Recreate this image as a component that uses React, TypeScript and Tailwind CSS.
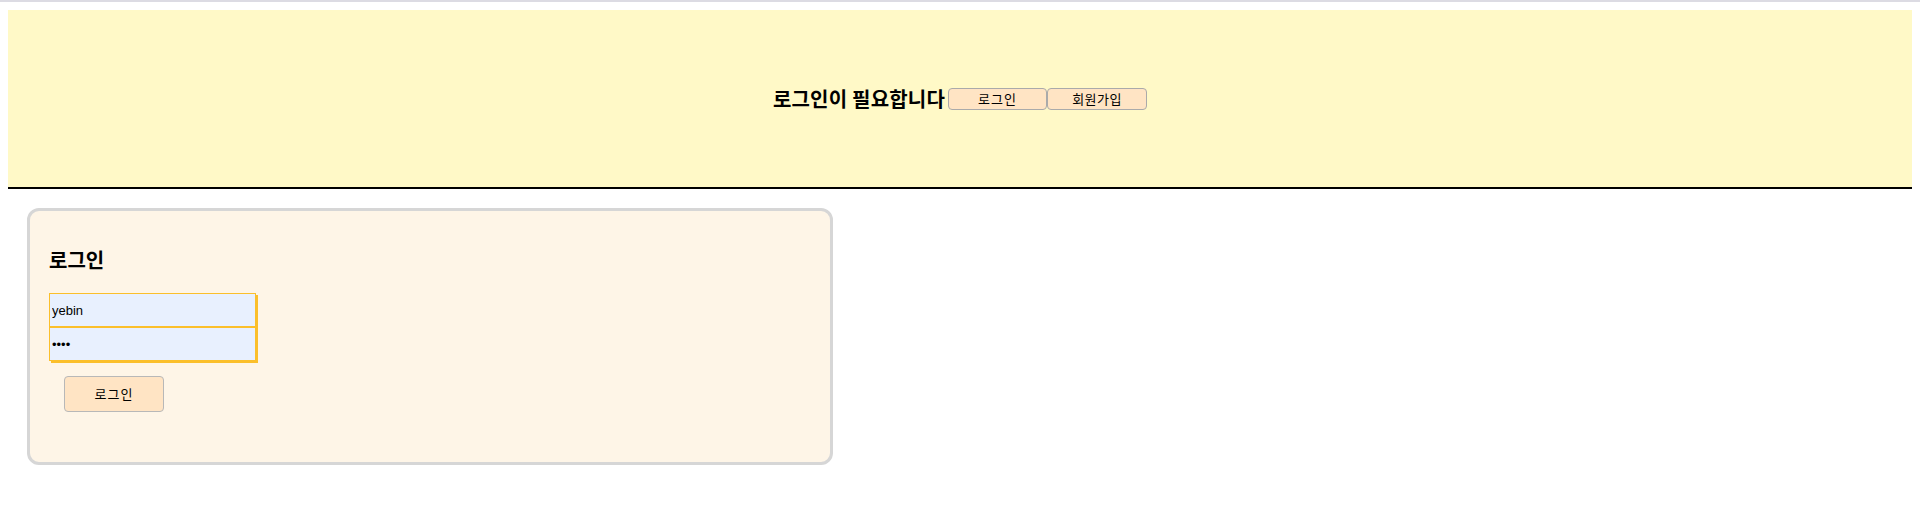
export default function App() {
  return (
    <div className="min-h-[531px] bg-white font-['Malgun_Gothic','Noto_Sans_CJK_KR',sans-serif] text-black">
      <div className="h-[2px] bg-[#dcdbe3]" />
      <div className="px-2 pt-2">
        {/* Header */}
        <header className="flex h-[179px] items-center justify-center border-b-2 border-black bg-[#fff9c7]">
          <h1 className="text-[20px] font-bold tracking-[0.2px]">로그인이 필요합니다</h1>
          <button className="ml-[3px] h-[22px] w-[99px] rounded-[4px] border border-[#aaaaaa] bg-[#ffe4c4] text-[13px] tracking-[1px]">
            로그인
          </button>
          <button className="h-[22px] w-[100px] rounded-[4px] border border-[#aaaaaa] bg-[#ffe4c4] text-[13px] tracking-[0.5px]">
            회원가입
          </button>
        </header>

        {/* Login card */}
        <div className="ml-[19px] mt-[19px] h-[257px] w-[806px] rounded-[12px] border-[3px] border-[#d6d6d6] bg-[#fef5e7] px-[19px] pt-[35px]">
          <h2 className="h-[28px] text-[20px] font-bold leading-[28px]">로그인</h2>
          <div className="mt-[19px] flex w-[207px] flex-col">
            <input
              defaultValue="yebin"
              className="h-[34px] w-[207px] border border-[#fbbf2b] bg-[#e8f0fe] px-[2px] font-['Liberation_Sans',Arial,sans-serif] text-[13px] shadow-[2px_2px_0_#fbbf2b] outline-none"
            />
            <input
              type="password"
              defaultValue="1234"
              className="h-[34px] w-[207px] border border-[#fbbf2b] bg-[#e8f0fe] px-[2px] font-['Liberation_Sans',Arial,sans-serif] text-[13px] shadow-[2px_2px_0_#fbbf2b] outline-none"
            />
          </div>
          <button className="ml-[15px] mt-[15px] h-[36px] w-[100px] rounded-[4px] border border-[#b8b8b8] bg-[#ffe4c4] text-[13px] tracking-[1px]">
            로그인
          </button>
        </div>
      </div>
    </div>
  )
}
